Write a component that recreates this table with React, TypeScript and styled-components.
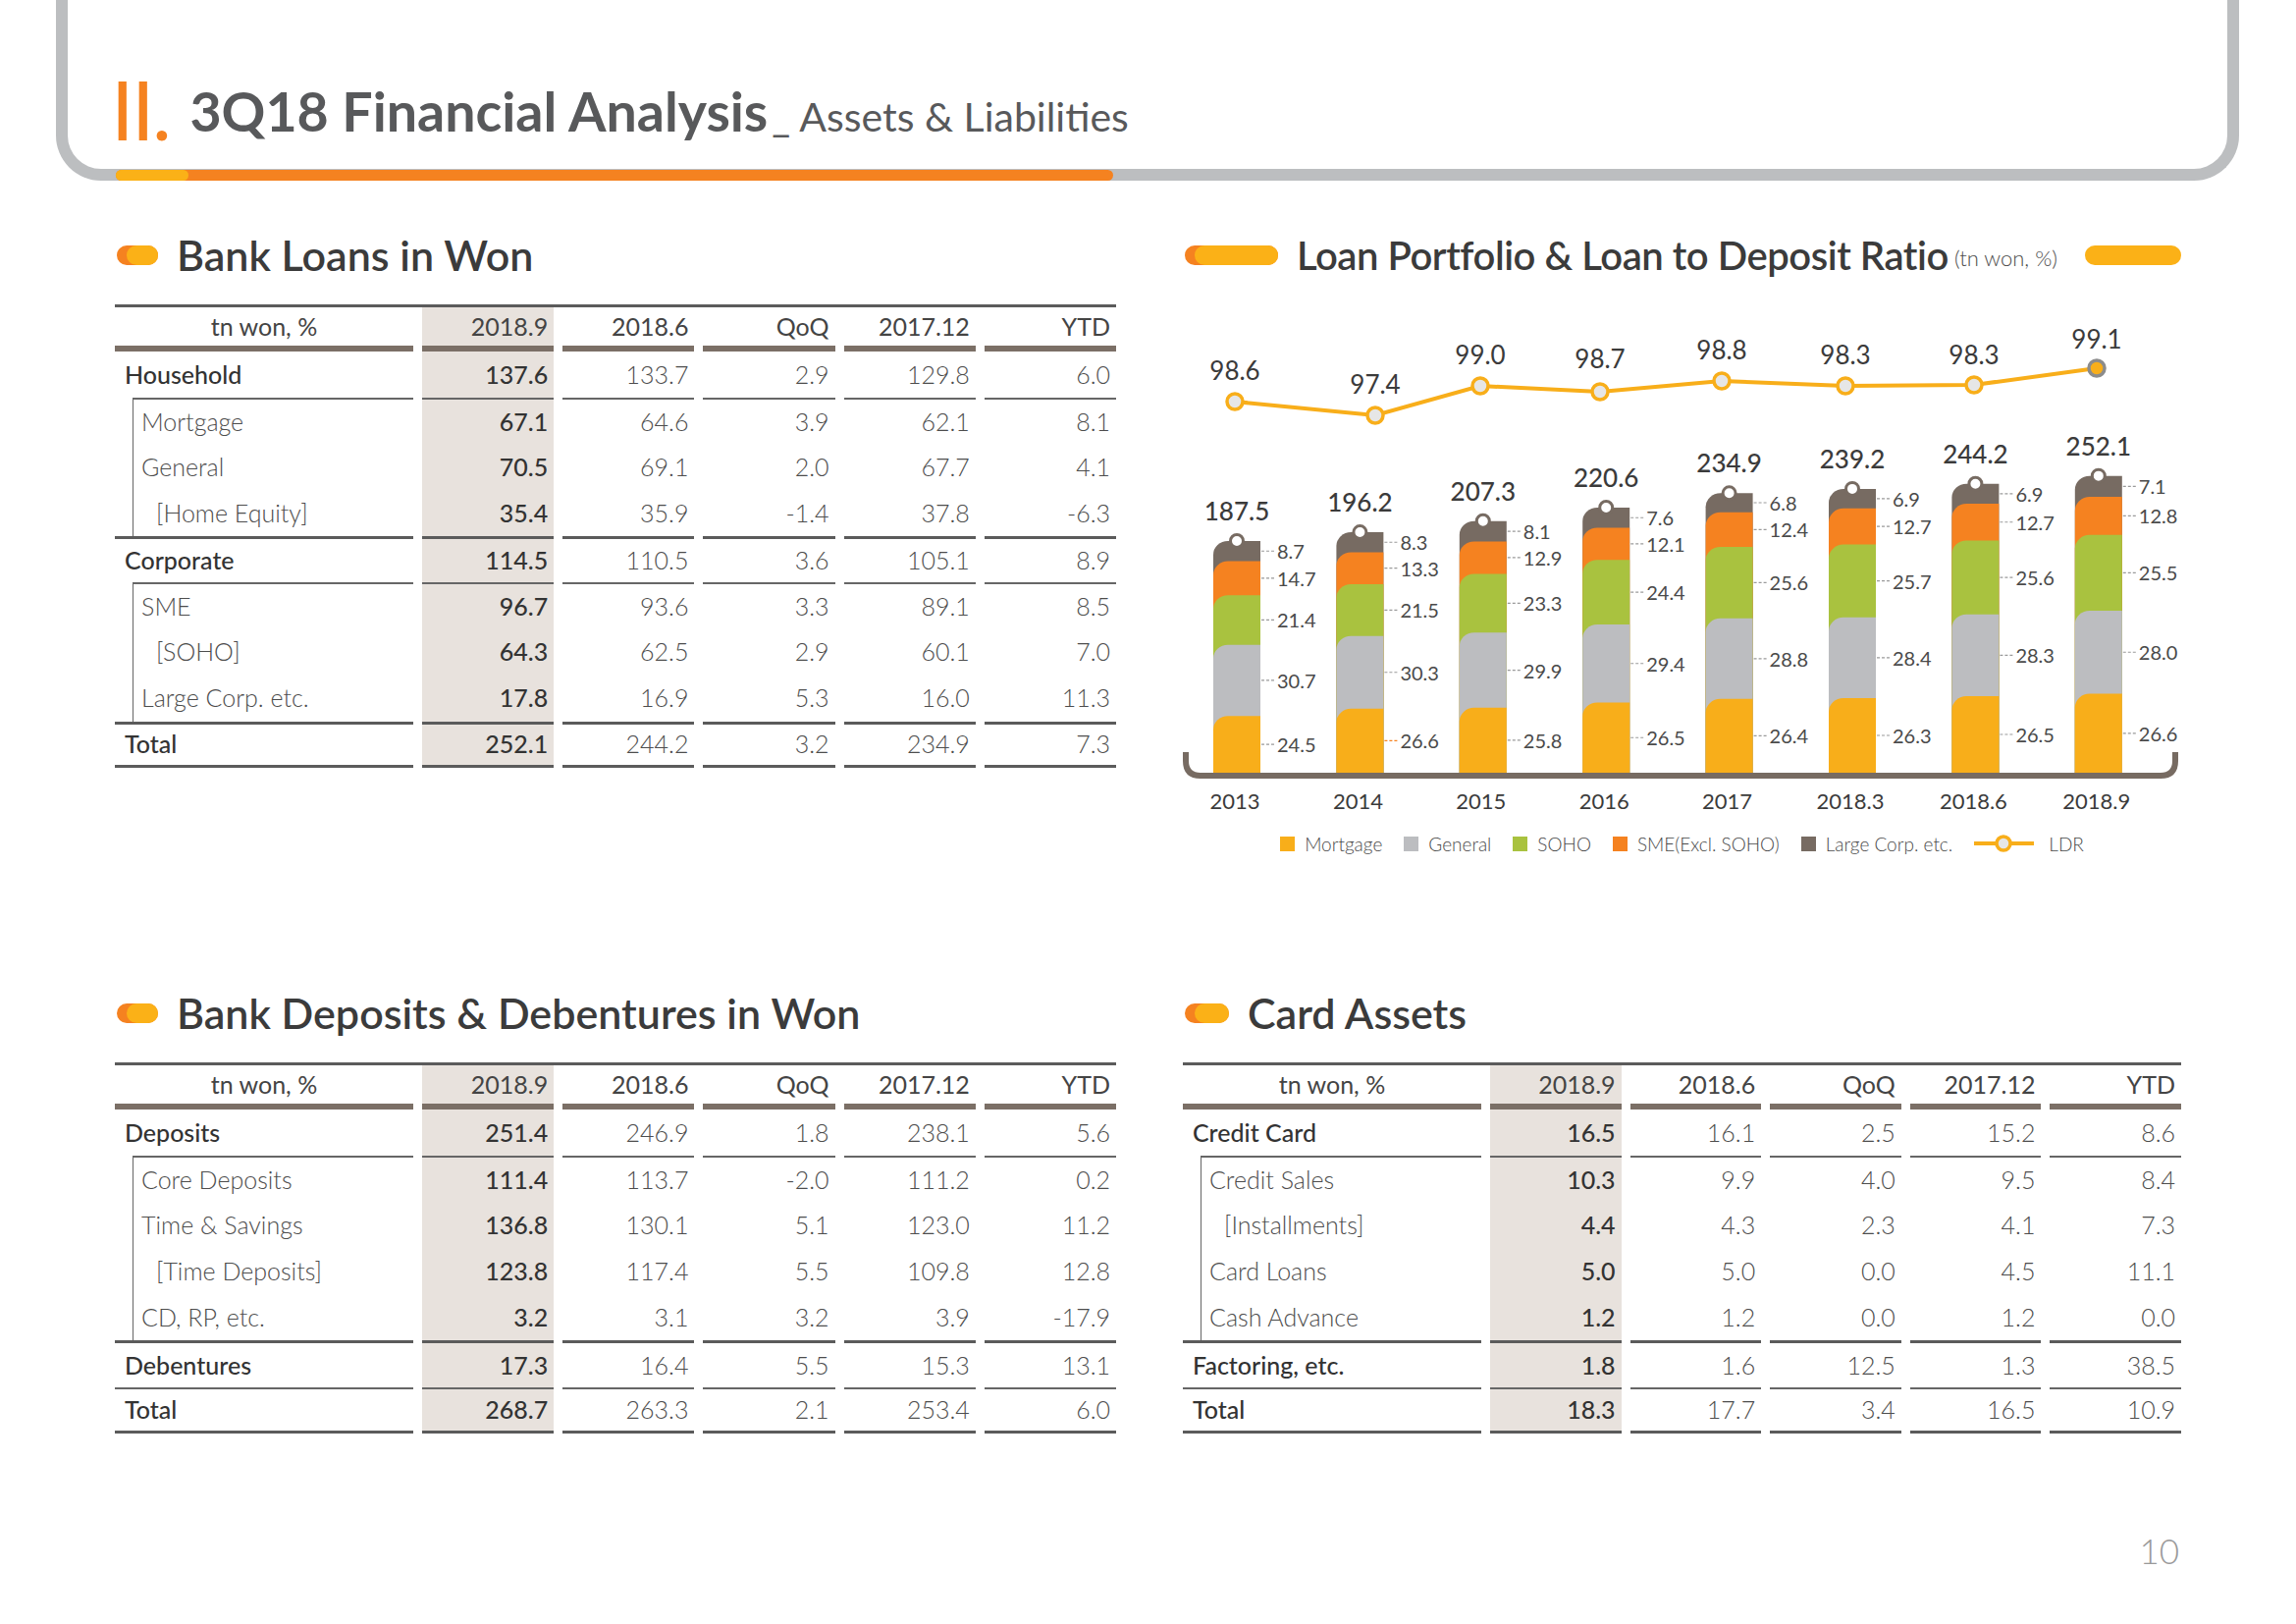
import React from "react";
import styled, { createGlobalStyle } from "styled-components";

const C = {
  yellow: "#f8ae1a",
  pillYellow: "#fbb117",
  orange: "#f58220",
  green: "#a9c23f",
  gray: "#bcbdc0",
  brown: "#776b62",
  text: "#3b3b3b",
  light: "#4d4d4d",
  shade: "#e8e2dd",
  rule: "#5b5b5b",
  headRule: "#7b6f66",
  frame: "#bcbec0",
};

const GlobalStyle = createGlobalStyle`
  html, body { margin: 0; padding: 0; background: #ffffff; }
  body { font-family: Lato, "Open Sans", "DejaVu Sans", sans-serif; color: ${C.text}; }
  * { box-sizing: border-box; }
`;

const Page = styled.div`
  width: 2339px;
  height: 1654px;
  overflow: hidden;
  background: #fff;
  display: flex;
  flex-direction: column;
`;

/* ---------- Header frame ---------- */

const Frame = styled.header`
  position: relative;
  flex: none;
  height: 184px;
  margin: 0 58px 0 57px;
  border: 12px solid ${C.frame};
  border-top: 0;
  border-radius: 0 0 46px 46px;
  display: flex;
  align-items: flex-end;
  padding: 0 0 23px 44px;
`;

const AccentBar = styled.div`
  position: absolute;
  left: 49px;
  bottom: -12px;
  width: 1016px;
  height: 11px;
  border-radius: 6px;
  background: ${C.orange};
  &::before {
    content: "";
    position: absolute;
    left: 0;
    top: 0;
    bottom: 0;
    width: 74px;
    border-radius: 6px;
    background: ${C.pillYellow};
  }
`;

const Title = styled.h1`
  margin: 0;
  font-family: Lato, sans-serif;
  font-weight: 700;
  font-size: 55.5px;
  line-height: 60px;
  color: #58595b;
  white-space: nowrap;
`;

const Numeral = styled.span`
  font-weight: 400;
  font-size: 84px;
  line-height: 60px;
  letter-spacing: -2.5px;
  color: ${C.orange};
  vertical-align: -9px;
  margin-right: 21px;
`;

const Subtitle = styled.span`
  font-weight: 400;
  font-size: 41px;
  margin-left: 4px;
`;

/* ---------- Main grid ---------- */

const Main = styled.main`
  flex: none;
  display: grid;
  grid-template-columns: 1020px 1017px;
  grid-template-rows: 772px 552px;
  column-gap: 68px;
  padding: 51px 0 0 117px;
`;

const Section = styled.section`
  display: flex;
  flex-direction: column;
`;

const SectionHead = styled.div<{ $tight?: boolean }>`
  display: flex;
  align-items: center;
  gap: 19px;
  height: 50px;
  font-family: Lato, sans-serif;
  font-weight: 600;
  font-size: ${(p) => (p.$tight ? "40px" : "43px")};
  letter-spacing: ${(p) => (p.$tight ? "-0.45px" : "0")};
  line-height: 50px;
  color: ${C.text};
  white-space: nowrap;
`;

const HeadPill = styled.span<{ $w: number; $plain?: boolean }>`
  position: relative;
  flex: none;
  width: ${(p) => p.$w}px;
  height: 20px;
  border-radius: 10px;
  background: ${(p) => (p.$plain ? C.pillYellow : C.orange)};
  margin-left: ${(p) => (p.$plain ? "auto" : "2px")};
  &::after {
    content: "";
    display: ${(p) => (p.$plain ? "none" : "block")};
    position: absolute;
    left: 10px;
    right: 0;
    top: 0;
    bottom: 0;
    border-radius: 10px;
    background: ${C.pillYellow};
  }
`;

const HeadUnit = styled.span`
  font-weight: 300;
  font-size: 22px;
  letter-spacing: 0;
  color: #4d4d4d;
  margin-left: -13px;
  padding-top: 6px;
`;

/* ---------- Tables ---------- */

type Line = "none" | "thin" | "thick";
type Kind = "group" | "sub" | "subIndent";
interface TRow {
  label: string;
  kind: Kind;
  values: string[];
  top: Line;
}

const lineCss = (l: Line) =>
  l === "thick" ? `3px solid ${C.rule}` : l === "thin" ? `2px solid #666` : "none";

const Grid = styled.div`
  display: grid;
  grid-template-columns: 304px repeat(5, 1fr);
  column-gap: 9px;
  border-top: 3px solid ${C.rule};
  margin-top: 25px;
  font-family: Lato, sans-serif;
  font-size: 25px;
`;

const HeadCell = styled.div<{ $label?: boolean; $shade?: boolean }>`
  height: 45px;
  border-bottom: 6px solid ${C.headRule};
  background: ${(p) => (p.$shade ? C.shade : "transparent")};
  display: flex;
  align-items: center;
  justify-content: ${(p) => (p.$label ? "center" : "flex-end")};
  padding: 0 6px 1px;
  font-weight: 400;
  color: #444;
`;

const LabelCell = styled.div<{ $top: Line; $bottom: boolean; $group: boolean }>`
  height: 47.1px;
  border-top: ${(p) => (p.$group ? lineCss(p.$top) : "none")};
  border-bottom: ${(p) => (p.$bottom ? `3px solid ${C.rule}` : "none")};
  display: flex;
  align-items: ${(p) => (p.$group ? "center" : "stretch")};
  padding-left: ${(p) => (p.$group ? "10px" : "18px")};
  padding-bottom: ${(p) => (p.$group ? "2px" : "0")};
  font-weight: ${(p) => (p.$group ? 500 : 300)};
  color: ${(p) => (p.$group ? "#333" : C.light)};
  white-space: nowrap;
`;

const SubLabel = styled.div<{ $first: boolean; $indent: boolean }>`
  flex: 1;
  display: flex;
  align-items: center;
  border-left: 1.5px solid #666;
  border-top: ${(p) => (p.$first ? "2px solid #666" : "none")};
  padding-left: ${(p) => (p.$indent ? "23px" : "8px")};
  padding-bottom: 2px;
`;

const Cell = styled.div<{ $top: Line; $bottom: boolean; $shade: boolean }>`
  height: 47.1px;
  border-top: ${(p) => lineCss(p.$top)};
  border-bottom: ${(p) => (p.$bottom ? `3px solid ${C.rule}` : "none")};
  background: ${(p) => (p.$shade ? C.shade : "transparent")};
  display: flex;
  align-items: center;
  justify-content: flex-end;
  padding: 0 6px 2px;
  font-weight: ${(p) => (p.$shade ? 500 : 300)};
  color: ${(p) => (p.$shade ? "#333" : C.light)};
`;

const HEAD = ["tn won, %", "2018.9", "2018.6", "QoQ", "2017.12", "YTD"];

function DataTable({ rows }: { rows: TRow[] }) {
  return (
    <Grid>
      {HEAD.map((h, i) => (
        <HeadCell key={h} $label={i === 0} $shade={i === 1}>
          {h}
        </HeadCell>
      ))}
      {rows.map((r, ri) => {
        const last = ri === rows.length - 1;
        const group = r.kind === "group";
        return (
          <React.Fragment key={r.label + ri}>
            <LabelCell $top={r.top} $bottom={last} $group={group}>
              {group ? (
                r.label
              ) : (
                <SubLabel $first={r.top === "thin"} $indent={r.kind === "subIndent"}>
                  {r.label}
                </SubLabel>
              )}
            </LabelCell>
            {r.values.map((v, ci) => (
              <Cell key={ci} $top={r.top} $bottom={last} $shade={ci === 0}>
                {v}
              </Cell>
            ))}
          </React.Fragment>
        );
      })}
    </Grid>
  );
}

const loans: TRow[] = [
  { label: "Household", kind: "group", top: "none", values: ["137.6", "133.7", "2.9", "129.8", "6.0"] },
  { label: "Mortgage", kind: "sub", top: "thin", values: ["67.1", "64.6", "3.9", "62.1", "8.1"] },
  { label: "General", kind: "sub", top: "none", values: ["70.5", "69.1", "2.0", "67.7", "4.1"] },
  { label: "[Home Equity]", kind: "subIndent", top: "none", values: ["35.4", "35.9", "-1.4", "37.8", "-6.3"] },
  { label: "Corporate", kind: "group", top: "thick", values: ["114.5", "110.5", "3.6", "105.1", "8.9"] },
  { label: "SME", kind: "sub", top: "thin", values: ["96.7", "93.6", "3.3", "89.1", "8.5"] },
  { label: "[SOHO]", kind: "subIndent", top: "none", values: ["64.3", "62.5", "2.9", "60.1", "7.0"] },
  { label: "Large Corp. etc.", kind: "sub", top: "none", values: ["17.8", "16.9", "5.3", "16.0", "11.3"] },
  { label: "Total", kind: "group", top: "thick", values: ["252.1", "244.2", "3.2", "234.9", "7.3"] },
];

const deposits: TRow[] = [
  { label: "Deposits", kind: "group", top: "none", values: ["251.4", "246.9", "1.8", "238.1", "5.6"] },
  { label: "Core Deposits", kind: "sub", top: "thin", values: ["111.4", "113.7", "-2.0", "111.2", "0.2"] },
  { label: "Time & Savings", kind: "sub", top: "none", values: ["136.8", "130.1", "5.1", "123.0", "11.2"] },
  { label: "[Time Deposits]", kind: "subIndent", top: "none", values: ["123.8", "117.4", "5.5", "109.8", "12.8"] },
  { label: "CD, RP, etc.", kind: "sub", top: "none", values: ["3.2", "3.1", "3.2", "3.9", "-17.9"] },
  { label: "Debentures", kind: "group", top: "thick", values: ["17.3", "16.4", "5.5", "15.3", "13.1"] },
  { label: "Total", kind: "group", top: "thin", values: ["268.7", "263.3", "2.1", "253.4", "6.0"] },
];

const cards: TRow[] = [
  { label: "Credit Card", kind: "group", top: "none", values: ["16.5", "16.1", "2.5", "15.2", "8.6"] },
  { label: "Credit Sales", kind: "sub", top: "thin", values: ["10.3", "9.9", "4.0", "9.5", "8.4"] },
  { label: "[Installments]", kind: "subIndent", top: "none", values: ["4.4", "4.3", "2.3", "4.1", "7.3"] },
  { label: "Card Loans", kind: "sub", top: "none", values: ["5.0", "5.0", "0.0", "4.5", "11.1"] },
  { label: "Cash Advance", kind: "sub", top: "none", values: ["1.2", "1.2", "0.0", "1.2", "0.0"] },
  { label: "Factoring, etc.", kind: "group", top: "thick", values: ["1.8", "1.6", "12.5", "1.3", "38.5"] },
  { label: "Total", kind: "group", top: "thin", values: ["18.3", "17.7", "3.4", "16.5", "10.9"] },
];

/* ---------- Chart ---------- */

const ChartSvg = styled.svg`
  display: block;
  overflow: visible;
  font-family: Lato, "Open Sans", sans-serif;
  .total { font-size: 26px; font-weight: 500; fill: #3b3b3b; }
  .seg { font-size: 20px; font-weight: 400; fill: #4a4a4a; }
  .ldr { font-size: 26px; font-weight: 400; fill: #3b3b3b; }
  .axis { font-size: 22px; font-weight: 400; fill: #3b3b3b; }
`;

const years = ["2013", "2014", "2015", "2016", "2017", "2018.3", "2018.6", "2018.9"];
const totals = [187.5, 196.2, 207.3, 220.6, 234.9, 239.2, 244.2, 252.1];
const shares = [
  [24.5, 30.7, 21.4, 14.7, 8.7],
  [26.6, 30.3, 21.5, 13.3, 8.3],
  [25.8, 29.9, 23.3, 12.9, 8.1],
  [26.5, 29.4, 24.4, 12.1, 7.6],
  [26.4, 28.8, 25.6, 12.4, 6.8],
  [26.3, 28.4, 25.7, 12.7, 6.9],
  [26.5, 28.3, 25.6, 12.7, 6.9],
  [26.6, 28.0, 25.5, 12.8, 7.1],
];
const segColors = [C.yellow, C.gray, C.green, C.orange, C.brown];
const ldrVals = ["98.6", "97.4", "99.0", "98.7", "98.8", "98.3", "98.3", "99.1"];
const ldrX = [53, 196, 303, 425, 549, 675, 806, 931];
const ldrY = [124, 138, 108, 114, 103, 108, 107, 90];
const ldrLabelY = [92, 106, 76, 80, 71, 76, 76, 60];

const BASE = 502;
const BW = 48;
const barX = (i: number) => 31 + 125.4 * i;
const barH = (v: number) => 1.027 * (v + 42.3);

const segPath = (x: number, top: number) => {
  const rx = 15;
  const ry = 14;
  return `M${x} ${BASE} L${x} ${top + ry} A${rx} ${ry} 0 0 1 ${x + rx} ${top} L${x + BW} ${top} L${x + BW} ${BASE} Z`;
};

function LoanChart() {
  return (
    <ChartSvg width={1017} height={560} viewBox="0 0 1017 560">
      {totals.map((t, i) => {
        const x = barX(i);
        const h = barH(t);
        const top = BASE - h;
        const cx = x + BW / 2;
        const s = shares[i];
        const cums: number[] = [];
        let acc = 0;
        s.forEach((v) => {
          cums.push(acc);
          acc += v;
        });
        const order = [4, 3, 2, 1, 0];
        return (
          <g key={years[i]}>
            {order.map((k) => (
              <path key={k} d={segPath(x, BASE - (h * (cums[k] + s[k])) / 100)} fill={segColors[k]} />
            ))}
            {s.map((v, k) => {
              const cy = BASE - (h * (cums[k] + v / 2)) / 100;
              const lead = i === 1 && k === 0 ? C.orange : "#9a9a9a";
              return (
                <g key={"l" + k}>
                  <line x1={x + BW + 1} x2={x + BW + 15} y1={cy} y2={cy} stroke={lead} strokeWidth={1.2} strokeDasharray="3 2" />
                  <text className="seg" x={x + BW + 17} y={cy} dominantBaseline="central">
                    {v.toFixed(1)}
                  </text>
                </g>
              );
            })}
            <circle cx={cx} cy={top} r={6.5} fill="#fff" stroke={C.brown} strokeWidth={3} />
            <text className="total" x={cx} y={top - 21} textAnchor="middle">
              {t.toFixed(1)}
            </text>
            <text className="axis" x={cx - 2} y={530} textAnchor="middle" dominantBaseline="central">
              {years[i]}
            </text>
          </g>
        );
      })}
      <path
        d="M3 481 L3 490 Q3 505 18 505 L996 505 Q1011 505 1011 490 L1011 481"
        fill="none"
        stroke={C.brown}
        strokeWidth={6}
      />
      <polyline
        points={ldrX.map((x, i) => `${x},${ldrY[i]}`).join(" ")}
        fill="none"
        stroke={C.yellow}
        strokeWidth={4}
      />
      {ldrX.map((x, i) => {
        const last = i === ldrX.length - 1;
        return (
          <g key={"d" + i}>
            <circle
              cx={x}
              cy={ldrY[i]}
              r={8}
              fill={last ? C.yellow : "#e6e6e6"}
              stroke={last ? "#8c8c8c" : C.yellow}
              strokeWidth={3.5}
            />
            <text className="ldr" x={x} y={ldrLabelY[i]} textAnchor="middle" dominantBaseline="central">
              {ldrVals[i]}
            </text>
          </g>
        );
      })}
    </ChartSvg>
  );
}

const Legend = styled.div`
  display: flex;
  justify-content: center;
  align-items: center;
  gap: 22px;
  height: 28px;
  font-family: Lato, sans-serif;
  font-weight: 300;
  font-size: 19px;
  color: #4a4a4a;
  white-space: nowrap;
`;

const LegendItem = styled.span<{ $gap?: number }>`
  display: flex;
  align-items: center;
  gap: ${(p) => p.$gap ?? 10}px;
`;

const Swatch = styled.span<{ $c: string }>`
  width: 15px;
  height: 15px;
  background: ${(p) => p.$c};
`;

const legendItems = [
  { label: "Mortgage", c: C.yellow },
  { label: "General", c: C.gray },
  { label: "SOHO", c: C.green },
  { label: "SME(Excl. SOHO)", c: C.orange },
  { label: "Large Corp. etc.", c: C.brown },
];

/* ---------- Footer ---------- */

const Footer = styled.footer`
  flex: none;
  display: flex;
  justify-content: flex-end;
  padding-right: 119px;
  font-family: Lato, sans-serif;
  font-weight: 300;
  font-size: 35px;
  line-height: 40px;
  color: #9a9a9a;
`;

export default function App() {
  return (
    <Page>
      <GlobalStyle />
      <Frame>
        <Title>
          <Numeral>II.</Numeral>3Q18 Financial Analysis
          <Subtitle>_ Assets &amp; Liabilities</Subtitle>
        </Title>
        <AccentBar />
      </Frame>
      <Main>
        <Section>
          <SectionHead>
            <HeadPill $w={42} />
            Bank Loans in Won
          </SectionHead>
          <DataTable rows={loans} />
        </Section>
        <Section>
          <SectionHead $tight>
            <HeadPill $w={95} />
            Loan Portfolio &amp; Loan to Deposit Ratio
            <HeadUnit>(tn won, %)</HeadUnit>
            <HeadPill $w={98} $plain />
          </SectionHead>
          <LoanChart />
          <Legend>
            {legendItems.map((it) => (
              <LegendItem key={it.label}>
                <Swatch $c={it.c} />
                {it.label}
              </LegendItem>
            ))}
            <LegendItem $gap={15}>
              <svg width="61" height="20" viewBox="0 0 61 20">
                <line x1="0" x2="61" y1="10" y2="10" stroke={C.yellow} strokeWidth="4" />
                <circle cx="30" cy="10" r="7" fill="#e6e6e6" stroke={C.yellow} strokeWidth="3.5" />
              </svg>
              LDR
            </LegendItem>
          </Legend>
        </Section>
        <Section>
          <SectionHead>
            <HeadPill $w={42} />
            Bank Deposits &amp; Debentures in Won
          </SectionHead>
          <DataTable rows={deposits} />
        </Section>
        <Section>
          <SectionHead>
            <HeadPill $w={45} />
            Card Assets
          </SectionHead>
          <DataTable rows={cards} />
        </Section>
      </Main>
      <Footer>10</Footer>
    </Page>
  );
}
